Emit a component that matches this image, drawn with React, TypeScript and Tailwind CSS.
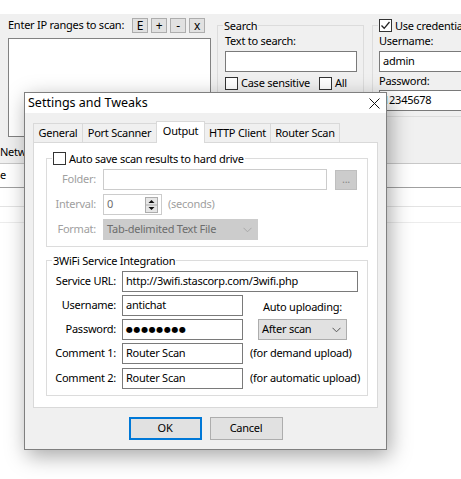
import React from 'react';

const Checkbox: React.FC<{ checked?: boolean }> = ({ checked }) => (
  <div className="w-[13px] h-[13px] border border-[#333333] bg-white flex items-center justify-center shrink-0">
    {checked && (
      <svg width="11" height="11" viewBox="0 0 11 11">
        <path d="M1.5 5.5 L4.2 8.3 L9.5 2" fill="none" stroke="#222" strokeWidth="1.3" />
      </svg>
    )}
  </div>
);

const GroupBox: React.FC<{ title: React.ReactNode; className?: string; bodyClassName?: string; children?: React.ReactNode; line?: string }> = ({
  title,
  className = '',
  bodyClassName = '',
  children,
  line = 'border-[#dcdcdc]',
}) => (
  <div className={`flex flex-col shrink-0 ${className}`}>
    <div className="flex items-center h-[14px]">
      <div className={`w-[6px] border-t ${line}`} />
      <div className="px-[1px] flex items-center gap-[3px] leading-none">{title}</div>
      <div className={`flex-1 border-t ${line}`} />
    </div>
    <div className={`flex-1 border-x border-b ${line} -mt-[7px] pt-[7px] ${bodyClassName}`}>{children}</div>
  </div>
);

const Chevron: React.FC<{ color: string }> = ({ color }) => (
  <svg width="9" height="6" viewBox="0 0 9 6">
    <path d="M0.5 0.8 L4.5 4.8 L8.5 0.8" fill="none" stroke={color} strokeWidth="1" />
  </svg>
);

const Field: React.FC<{ w: string; children?: React.ReactNode }> = ({ w, children }) => (
  <div className={`${w} h-[21px] border border-[#7a7a7a] bg-white flex items-center px-[3px] whitespace-nowrap overflow-hidden`}>
    {children}
  </div>
);

const tabs = ['General', 'Port Scanner', 'Output', 'HTTP Client', 'Router Scan'];
const tabWidths: Record<string, string> = {
  General: 'w-[50px]',
  'Port Scanner': 'w-[75px]',
  Output: 'w-[49px]',
  'HTTP Client': 'w-[67px]',
  'Router Scan': 'w-[70px]',
};

const SettingsDialog: React.FC = () => (
  <div className="absolute left-[24px] top-[92px] w-[363px] h-[358px] border border-[#7f7f7f] bg-[#f0f0f0] flex flex-col shadow-[3px_6px_20px_rgba(0,0,0,0.35)]">
    {/* title bar */}
    <div className="h-[20px] bg-white flex items-center justify-between pl-[3px] pr-[6px]">
      <span className="text-[12.5px] tracking-normal text-black">Settings and Tweaks</span>
      <svg width="11" height="11" viewBox="0 0 11 11">
        <path d="M0.5 0.5 L10.5 10.5 M10.5 0.5 L0.5 10.5" stroke="#111" strokeWidth="1" />
      </svg>
    </div>

    <div className="flex-1 flex flex-col px-[8px] pt-[8px]">
      {/* tabs */}
      <div className="flex items-end h-[21px] pl-[1px]">
        {tabs.map((t) => {
          const active = t === 'Output';
          return (
            <div
              key={t}
              className={`${tabWidths[t]} -ml-[1px] flex items-center justify-center border border-b-0 border-[#d9d9d9] ${
                active ? 'h-[22px] bg-white relative z-10 -mb-[1px] pb-[2px]' : 'h-[19px] bg-[#f0f0f0]'
              }`}
            >
              {t}
            </div>
          );
        })}
      </div>

      {/* tab panel */}
      <div className="h-[266px] border border-[#d9d9d9] bg-white pl-[12px] pr-[8px] pt-[8px]">
        <GroupBox
          className="w-[322px]"
          bodyClassName="pb-[6px]"
          title={
            <>
              <Checkbox />
              <span>Auto save scan results to hard drive</span>
            </>
          }
        >
          <div className="flex flex-col gap-[4px] mt-[4px]">
            <div className="flex items-center">
              <div className="w-[49px] text-right text-[#a0a0a0]">Folder:</div>
              <div className="ml-[7px] w-[224px] h-[21px] border border-[#cccccc]" />
              <div className="ml-[8px] w-[22px] h-[20px] bg-[#cccccc] border border-[#bfbfbf] flex items-center justify-center text-[#8a8a8a] leading-none pb-[3px]">
                ...
              </div>
            </div>
            <div className="flex items-center">
              <div className="w-[49px] text-right text-[#a0a0a0]">Interval:</div>
              <div className="ml-[7px] w-[59px] h-[21px] border border-[#cccccc] flex items-center justify-between pl-[3px] pr-[3px] text-[#6d6d6d]">
                <span>0</span>
                <svg width="13" height="16" viewBox="0 0 13 16">
                  <rect x="0.5" y="0.5" width="12" height="15" fill="#e6e6e6" stroke="#adadad" />
                  <path d="M1 8 H12" stroke="#adadad" />
                  <path d="M3.5 6 L6.5 3 L9.5 6 Z" fill="#111" />
                  <path d="M3.5 10 L6.5 13 L9.5 10 Z" fill="#111" />
                </svg>
              </div>
              <div className="ml-[6px] text-[#a0a0a0]">(seconds)</div>
            </div>
            <div className="flex items-center">
              <div className="w-[49px] text-right text-[#a0a0a0]">Format:</div>
              <div className="ml-[7px] w-[155px] h-[21px] bg-[#cccccc] border border-[#cccccc] flex items-center justify-between pl-[3px] pr-[5px] text-[#6d6d6d]">
                <span>Tab-delimited Text File</span>
                <Chevron color="#a8a8a8" />
              </div>
            </div>
          </div>
        </GroupBox>

        <GroupBox className="w-[322px] mt-[6px]" bodyClassName="pb-[6px]" title={<span>3WiFi Service Integration</span>}>
          <div className="flex flex-col gap-[3px] mt-[4px]">
            <div className="flex items-center">
              <div className="w-[69px] text-right">Service URL:</div>
              <div className="ml-[6px]">
                <Field w="w-[236px]">http://3wifi.stascorp.com/3wifi.php</Field>
              </div>
            </div>
            <div className="flex items-center">
              <div className="w-[69px] text-right">Username:</div>
              <div className="ml-[6px]">
                <Field w="w-[121px]">antichat</Field>
              </div>
              <div className="ml-[15px] w-[89px] text-center pt-[3px]">Auto uploading:</div>
            </div>
            <div className="flex items-center">
              <div className="w-[69px] text-right">Password:</div>
              <div className="ml-[6px]">
                <Field w="w-[121px]">
                  <span className="text-[8px] tracking-[0.6px] font-['DejaVu_Sans',sans-serif]">●●●●●●●●</span>
                </Field>
              </div>
              <div className="ml-[15px] w-[89px] h-[21px] bg-[#e1e1e1] border border-[#adadad] flex items-center justify-between pl-[3px] pr-[5px]">
                <span>After scan</span>
                <Chevron color="#555555" />
              </div>
            </div>
            <div className="flex items-center">
              <div className="w-[69px] text-right">Comment 1:</div>
              <div className="ml-[6px]">
                <Field w="w-[121px]">Router Scan</Field>
              </div>
              <div className="ml-[7px]">(for demand upload)</div>
            </div>
            <div className="flex items-center mt-[1px]">
              <div className="w-[69px] text-right">Comment 2:</div>
              <div className="ml-[6px]">
                <Field w="w-[121px]">Router Scan</Field>
              </div>
              <div className="ml-[7px]">(for automatic upload)</div>
            </div>
          </div>
        </GroupBox>
      </div>

      {/* buttons */}
      <div className="flex justify-center gap-[8px] mt-[9px]">
        <button className="w-[73px] h-[23px] border-2 border-[#0078d7] bg-[#e1e1e1] text-black">OK</button>
        <button className="w-[73px] h-[23px] border border-[#adadad] bg-[#e1e1e1] text-black">Cancel</button>
      </div>
    </div>
  </div>
);

export default function App() {
  return (
    <div className="w-[461px] h-[479px] relative overflow-hidden bg-white font-['Noto_Sans',sans-serif] text-[11px] tracking-[-0.25px] text-black">
      <div className="h-[14px]" />

      {/* main window top area */}
      <div className="h-[127px] bg-[#f0f0f0] flex pt-[4px]">
        <div className="w-[217px] shrink-0 pl-[8px] flex flex-col">
          <div className="flex items-center h-[15px]">
            <div className="w-[124px] whitespace-nowrap">Enter IP ranges to scan:</div>
            <div className="flex gap-[3px]">
              {['E', '+', '-', 'x'].map((b) => (
                <div key={b} className="w-[16px] h-[15px] bg-[#e1e1e1] border border-[#adadad] flex items-center justify-center leading-none text-[12px]">
                  {b}
                </div>
              ))}
            </div>
          </div>
          <div className="mt-[5px] w-[203px] h-[99px] border border-[#828282] bg-white" />
        </div>

        <GroupBox className="w-[147px] h-[99px]" bodyClassName="px-[7px]" title={<span>Search</span>}>
          <div className="mt-[2px] leading-[14px]">Text to search:</div>
          <div className="mt-[3px] w-[132px] h-[21px] border border-[#7a7a7a] bg-white" />
          <div className="mt-[3px] flex items-center">
            <Checkbox />
            <span className="ml-[3px]">Case sensitive</span>
            <div className="ml-[9px] flex items-center">
              <Checkbox />
              <span className="ml-[3px]">All</span>
            </div>
          </div>
        </GroupBox>

        <GroupBox
          className="ml-[8px] w-[130px] h-[99px]"
          bodyClassName="px-[6px]"
          title={
            <>
              <Checkbox checked />
              <span className="whitespace-nowrap">Use credentials</span>
            </>
          }
        >
          <div className="mt-[2px] leading-[14px]">Username:</div>
          <div className="mt-[3px] w-[130px] h-[21px] border border-[#7a7a7a] bg-white flex items-center px-[3px]">admin</div>
          <div className="mt-[2px] leading-[14px]">Password:</div>
          <div className="mt-[2px] w-[130px] h-[21px] border border-[#7a7a7a] bg-white flex items-center px-[3px]">12345678</div>
        </GroupBox>
      </div>

      {/* list header and rows */}
      <div className="h-[23px] bg-[#f0f0f0] border-b border-[#c8c8c8] flex items-center whitespace-nowrap">Network</div>
      <div className="h-[24px] border-b border-[#a0a0a0] flex items-center">e</div>
      <div className="h-[19px] border-b border-[#e3e3e3]" />
      <div className="h-[16px] border-b border-[#ececec]" />

      <SettingsDialog />
    </div>
  );
}
